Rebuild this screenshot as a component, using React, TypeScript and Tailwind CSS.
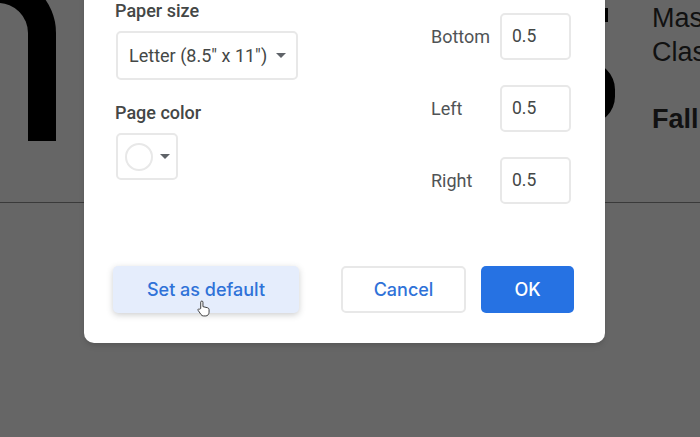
const field = "h-[47px] w-[71px] rounded-[5px] border-2 border-[#e8e8e8] pl-[10px] flex items-center text-[17.5px] text-[#444746]";

function Caret({ className }: { className: string }) {
  return (
    <svg viewBox="0 0 10 5" className={className}>
      <path d="M0 0h10L5 5z" fill="#5f6368" />
    </svg>
  );
}

function MarginRow({ label }: { label: string }) {
  return (
    <div className="flex items-center justify-between w-[140px]">
      <span className="text-[18px] text-[#505356]">{label}</span>
      <div className={field}>0.5</div>
    </div>
  );
}

export default function App() {
  return (
    <div className="relative h-[437px] w-[700px] overflow-hidden bg-[#666666] font-['Roboto',sans-serif]">
      {/* page behind the dialog */}
      <div className="absolute left-[-40px] top-[-25px] h-[166px] w-[96px] rounded-tr-[58px] border-r-[28px] border-t-[28px] border-black" />
      <div className="absolute left-0 top-[202px] h-px w-full bg-[#3a3a3a]" />
      <div className="absolute left-[560px] top-[62px] h-[62px] w-[55px] rounded-full bg-black" />
      <div className="absolute left-[605px] top-[8px] h-[14px] w-[3px] bg-black" />
      <div className="absolute left-[652px] top-px font-['Liberation_Sans',sans-serif] text-[27px] leading-[34px] text-[#111111]">
        <div>Master</div>
        <div>Class</div>
        <div className="mt-[33px] font-bold">Fall</div>
      </div>

      {/* dialog */}
      <div className="absolute left-[84px] top-[-20px] flex h-[363px] w-[521px] flex-col rounded-[10px] bg-white pl-[29px] pr-[31px] shadow-md">
        <div className="flex justify-between pr-[3px] pt-[20px]">
          <div className="flex flex-col pl-[2px]">
            <div className="text-[18px] font-medium leading-[21px] text-[#444746]">Paper size</div>
            <div className="ml-px mt-[10px] flex h-[49px] w-[182px] items-center justify-between rounded-[5px] border-2 border-[#e8e8e8] pl-[11px] pr-[10px] text-[18px] text-[#444746]">
              Letter (8.5" x 11")
              <Caret className="h-[5px] w-[10px]" />
            </div>
            <div className="mt-[22px] text-[18px] font-medium leading-[21px] text-[#444746]">Page color</div>
            <div className="ml-px mt-[10px] flex h-[47px] w-[62px] items-center gap-[7px] rounded-[5px] border-2 border-[#e8e8e8] pl-[7px]">
              <div className="h-[28px] w-[28px] rounded-full border-2 border-[#e8e8e8]" />
              <Caret className="h-[5px] w-[10px]" />
            </div>
          </div>
          <div className="flex flex-col gap-[25px] pt-[13px]">
            <MarginRow label="Bottom" />
            <MarginRow label="Left" />
            <MarginRow label="Right" />
          </div>
        </div>
        <div className="mt-auto mb-[30px] flex items-center justify-between font-['Inter',sans-serif] text-[18px] font-medium">
          <div className="relative flex h-[47px] w-[186px] items-center justify-center rounded-[5px] bg-[#e5edfc] text-[#2f72d8] shadow-[0_2px_6px_rgba(60,64,67,0.25)]">
            Set as default
            <svg viewBox="0 0 14 18" className="absolute left-[84px] top-[34px] h-[17px] w-[13px]">
              <path d="M4 9V2.2a1.2 1.2 0 0 1 2.4 0V7l5 1.2c1 .3 1.6 1 1.6 2V13c0 2-1.5 4-3.5 4H7c-1.2 0-2-.5-2.7-1.5L1.2 11c-.7-1.2.9-2.2 1.8-1.2z" fill="#ffffff" stroke="#333333" strokeWidth="1" />
            </svg>
          </div>
          <div className="flex gap-[15px]">
            <div className="flex h-[47px] w-[125px] items-center justify-center rounded-[5px] border-2 border-[#e8e8e8] text-[#2f72d8]">Cancel</div>
            <div className="flex h-[47px] w-[93px] items-center justify-center rounded-[5px] bg-[#2672e3] text-white">OK</div>
          </div>
        </div>
      </div>
    </div>
  );
}
